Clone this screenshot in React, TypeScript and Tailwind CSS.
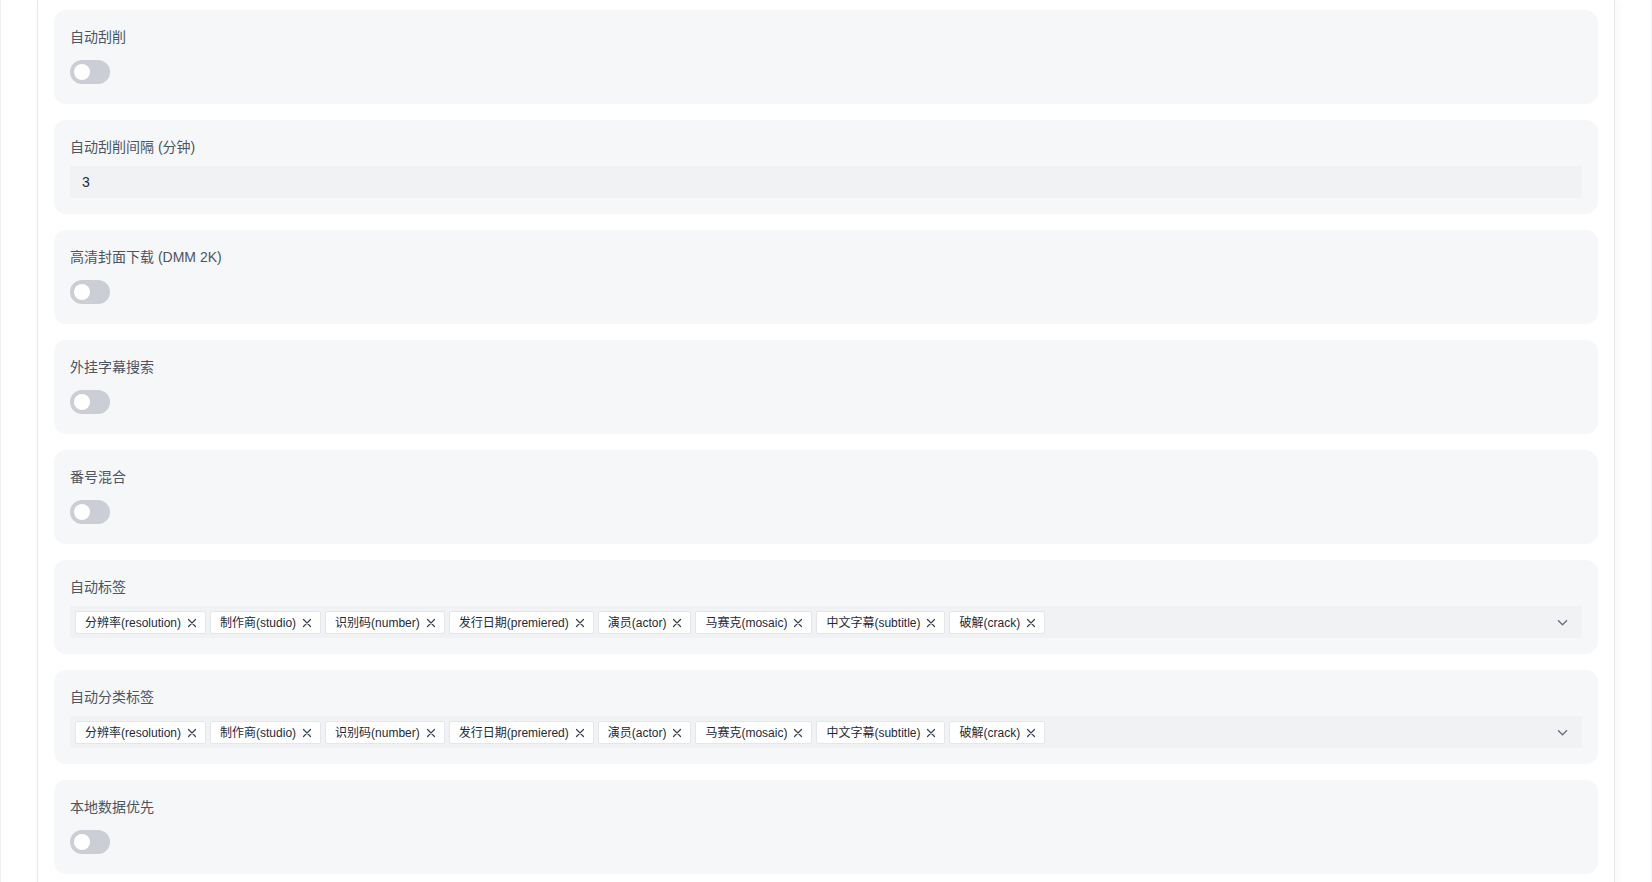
import { useState } from "react";

const tagOptions = [
  "分辨率(resolution)",
  "制作商(studio)",
  "识别码(number)",
  "发行日期(premiered)",
  "演员(actor)",
  "马赛克(mosaic)",
  "中文字幕(subtitle)",
  "破解(crack)",
];

type Field =
  | { kind: "switch"; label: string }
  | { kind: "number"; label: string; value: string }
  | { kind: "tags"; label: string };

const fields: Field[] = [
  { kind: "switch", label: "自动刮削" },
  { kind: "number", label: "自动刮削间隔 (分钟)", value: "3" },
  { kind: "switch", label: "高清封面下载 (DMM 2K)" },
  { kind: "switch", label: "外挂字幕搜索" },
  { kind: "switch", label: "番号混合" },
  { kind: "tags", label: "自动标签" },
  { kind: "tags", label: "自动分类标签" },
  { kind: "switch", label: "本地数据优先" },
];

function Toggle() {
  const [on, setOn] = useState(false);
  return (
    <button
      type="button"
      onClick={() => setOn(!on)}
      className={`relative w-10 h-6 rounded-full transition-colors ${on ? "bg-blue-500" : "bg-[#cbced4]"}`}
    >
      <span
        className={`absolute top-1 left-1 w-4 h-4 rounded-full bg-white transition-transform ${on ? "translate-x-4" : ""}`}
      />
    </button>
  );
}

function CloseIcon() {
  return (
    <svg width="10" height="10" viewBox="0 0 10 10" className="text-[#374151]">
      <path d="M1.5 1.5l7 7M8.5 1.5l-7 7" stroke="currentColor" strokeWidth="1.2" strokeLinecap="round" />
    </svg>
  );
}

function TagSelect() {
  const [tags, setTags] = useState(tagOptions);
  return (
    <div className="h-8 bg-[#f1f2f4] flex items-center pl-[5px] pr-[14px]">
      <div className="flex-1 flex items-center gap-1 pt-px">
        {tags.map((t) => (
          <span
            key={t}
            className="h-[23px] flex items-center gap-[6px] bg-white border border-[#e4e6ea] rounded-[2px] pl-[9px] pr-[8px] text-xs text-[#1f2937]"
          >
            {t}
            <button type="button" onClick={() => setTags(tags.filter((x) => x !== t))} className="flex items-center">
              <CloseIcon />
            </button>
          </span>
        ))}
      </div>
      <svg width="11" height="7" viewBox="0 0 11 7" className="text-[#6b7280]">
        <path d="M1 1.2l4.5 4.5L10 1.2" fill="none" stroke="currentColor" strokeWidth="1.4" />
      </svg>
    </div>
  );
}

export default function App() {
  return (
    <div className="min-h-screen bg-white font-['Liberation_Sans','Noto_Sans_CJK_SC',sans-serif] border-x border-[#f0f0f2]">
      <div className="mx-auto w-[1578px] border-x border-[#e5e7eb] shadow-[3px_0_8px_rgba(0,0,0,0.03)] px-4 pt-[10px] pb-4 flex flex-col gap-4">
        {fields.map((f) => (
          <div key={f.label} className="bg-[#f6f7f9] rounded-xl p-4">
            <div className="text-sm leading-[22px] text-[#4b5563] mb-2">{f.label}</div>
            {f.kind === "switch" && (
              <div className="h-8 flex items-center">
                <Toggle />
              </div>
            )}
            {f.kind === "number" && (
              <input
                defaultValue={f.value}
                className="w-full h-8 bg-[#f1f2f4] px-3 text-sm text-[#1f2937] outline-none"
              />
            )}
            {f.kind === "tags" && <TagSelect />}
          </div>
        ))}
      </div>
    </div>
  );
}
